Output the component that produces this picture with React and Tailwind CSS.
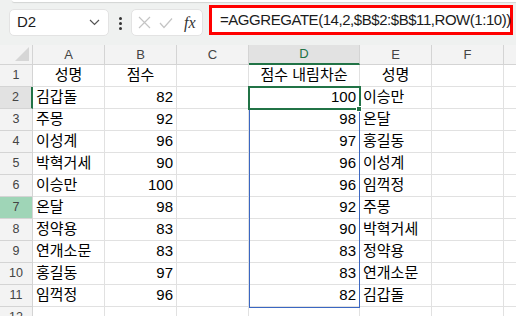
import React from "react";

const cols = [
  { key: "A", w: "w-[72px]" },
  { key: "B", w: "w-[72px]" },
  { key: "C", w: "w-[72px]" },
  { key: "D", w: "w-[111px]" },
  { key: "E", w: "w-[72px]" },
  { key: "F", w: "w-[72px]" },
  { key: "", w: "w-[20px]" },
];

const left = [
  ["성명", "점수"],
  ["김갑돌", 82],
  ["주몽", 92],
  ["이성계", 96],
  ["박혁거세", 90],
  ["이승만", 100],
  ["온달", 98],
  ["정약용", 83],
  ["연개소문", 83],
  ["홍길동", 97],
  ["임꺽정", 96],
];

const right = [
  ["점수 내림차순", "성명"],
  [100, "이승만"],
  [98, "온달"],
  [97, "홍길동"],
  [96, "이성계"],
  [96, "임꺽정"],
  [92, "주몽"],
  [90, "박혁거세"],
  [83, "정약용"],
  [83, "연개소문"],
  [82, "김갑돌"],
];

function Cell({ w, align = "left", children }) {
  const a =
    align === "right"
      ? "justify-end pr-[3px]"
      : align === "center"
      ? "justify-center"
      : "justify-start pl-[3px]";
  return (
    <div
      className={`${w} h-full shrink-0 flex items-center ${a} border-r border-b border-[#e1e1e1] overflow-hidden whitespace-nowrap`}
    >
      {children}
    </div>
  );
}

export default function App() {
  const rows = Array.from({ length: 12 }, (_, i) => i);

  return (
    <div
      className="relative w-[516px] h-[316px] overflow-hidden bg-white text-black"
      style={{ fontFamily: '"Liberation Sans", "Noto Sans CJK KR", sans-serif' }}
    >
      {/* FORMULA BAR */}
      <div className="relative h-[45px] bg-[#eff1f0] flex items-start">
        <div className="absolute top-0 left-3 right-0 h-[2px] bg-white rounded-bl-md shadow-[0_1px_1px_rgba(0,0,0,0.12)]" />

        {/* name box */}
        <div className="ml-[9px] mt-[9px] w-[100px] h-[27px] bg-white rounded-[5px] border border-[#e3e3e3] flex items-center justify-between pl-[7px] pr-[8px]">
          <span className="text-[15px] text-[#1b1b1b]">D2</span>
          <svg width="11" height="7" viewBox="0 0 11 7">
            <path d="M1 1 L5.5 5.5 L10 1" fill="none" stroke="#555" strokeWidth="1.2" />
          </svg>
        </div>

        {/* dots */}
        <div className="ml-[10px] mt-[17px] flex flex-col gap-[2px]">
          <div className="w-[3px] h-[3px] rounded-full bg-[#333]" />
          <div className="w-[3px] h-[3px] rounded-full bg-[#333]" />
          <div className="w-[3px] h-[3px] rounded-full bg-[#333]" />
        </div>

        {/* fx box */}
        <div className="ml-[9px] mt-[9px] w-[72px] h-[27px] bg-white rounded-[5px] border border-[#e3e3e3] flex items-center pl-[6px] gap-[8px]">
          <svg width="13" height="13" viewBox="0 0 13 13">
            <path d="M1 1 L12 12 M12 1 L1 12" stroke="#c4c4c4" strokeWidth="1.2" />
          </svg>
          <svg width="14" height="12" viewBox="0 0 14 12">
            <path d="M1 6 L5 10.5 L13 1.5" fill="none" stroke="#c4c4c4" strokeWidth="1.2" />
          </svg>
          <span
            className="ml-[3px] text-[16px] italic text-[#333] leading-none"
            style={{ fontFamily: '"Liberation Serif", serif' }}
          >
            fx
          </span>
        </div>

        {/* formula */}
        <div className="ml-[6px] mt-[5px] w-[304px] h-[30px] border-[3px] border-[#ff0000] flex items-center pl-[8px] bg-white">
          <span className="text-[15px] text-[#1b1b1b] tracking-[-0.45px] whitespace-nowrap">
            =AGGREGATE(14,2,$B$2:$B$11,ROW(1:10))
          </span>
        </div>
      </div>

      {/* COLUMN HEADERS */}
      <div className="flex h-[20px] bg-[#f3f3f3] text-[13px] text-[#444]">
        <div className="w-[33px] h-full shrink-0 border-r border-b border-[#d4d4d4] relative">
          <svg className="absolute right-[3px] bottom-[3px]" width="14" height="14" viewBox="0 0 14 14">
            <path d="M14 0 L14 14 L0 14 Z" fill="#d6d6d6" />
          </svg>
        </div>
        {cols.map((c, idx) => (
          <div
            key={idx}
            className={`${c.w} h-full shrink-0 flex items-center justify-center border-r border-[#d4d4d4] ${
              c.key === "D"
                ? "bg-[#e2e2e2] text-[#217346] border-b-2 border-b-[#217346]"
                : "border-b"
            }`}
          >
            {c.key}
          </div>
        ))}
      </div>

      {/* ROWS */}
      {rows.map((i) => {
        const l = left[i];
        const r = right[i];
        const head = i === 0;
        return (
          <div key={i} className="flex h-[22px] text-[15px]">
            <div
              className={`w-[33px] h-full shrink-0 flex items-center justify-center text-[12.5px] border-b border-[#d4d4d4] ${
                i === 1
                  ? "bg-[#e2e2e2] text-[#444] border-r-2 border-r-[#217346]"
                  : i === 6
                  ? "bg-[#9fd5b7] text-[#444] border-r"
                  : "bg-[#f3f3f3] text-[#444] border-r"
              }`}
            >
              {i + 1}
            </div>
            <Cell w="w-[72px]" align={head ? "center" : "left"}>
              {l && l[0]}
            </Cell>
            <Cell w="w-[72px]" align={head ? "center" : "right"}>
              {l && l[1]}
            </Cell>
            <Cell w="w-[72px]" />
            <Cell w="w-[111px]" align={head ? "center" : "right"}>
              {r && r[0]}
            </Cell>
            <Cell w="w-[72px]" align={head ? "center" : "left"}>
              {r && r[1]}
            </Cell>
            <Cell w="w-[72px]" />
            <Cell w="w-[20px]" />
          </div>
        );
      })}

      {/* SPILL RANGE */}
      <div className="absolute left-[249px] top-[87px] w-[111px] h-[221px] border border-[#3b67c2] pointer-events-none" />

      {/* ACTIVE CELL */}
      <div className="absolute left-[248px] top-[86px] w-[113px] h-[24px] border-2 border-[#217346] pointer-events-none" />
      <div className="absolute left-[356px] top-[106px] w-[6px] h-[6px] bg-[#217346] border border-white" />
    </div>
  );
}
